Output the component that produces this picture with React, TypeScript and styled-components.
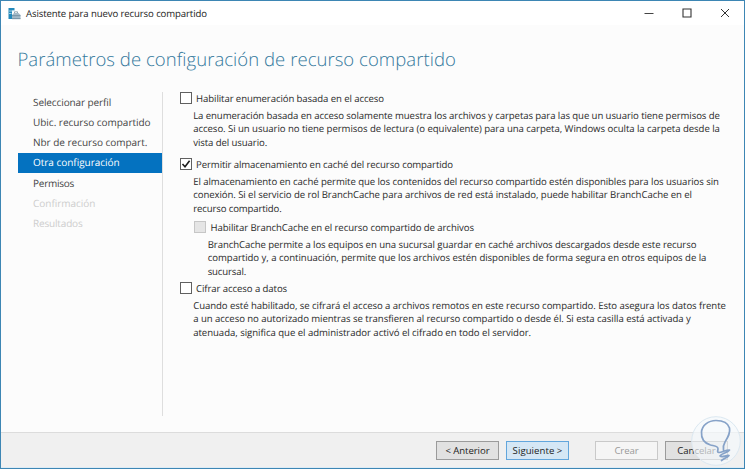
import React from 'react';
import styled, { createGlobalStyle, css } from 'styled-components';

const GlobalStyle = createGlobalStyle`
  * { box-sizing: border-box; }
  html, body { margin: 0; padding: 0; overflow: hidden; }
  body { font-family: 'Open Sans', 'Noto Sans', sans-serif; text-rendering: geometricPrecision; }
`;

const Window = styled.div`
  position: relative;
  display: flex;
  flex-direction: column;
  width: 745px;
  height: 469px;
  border: 1px solid #3d86b4;
  background: #fcfcfc;
  color: #2b2b2b;
  font-size: 9.6px;
`;

const TitleBar = styled.header`
  display: flex;
  align-items: center;
  height: 24px;
  padding: 0 14px 0 7px;
  background: #fff;
`;

const Title = styled.span`
  flex: 1;
  margin-left: 5px;
  letter-spacing: -0.11px;
  color: #222;
  white-space: nowrap;
`;

const WindowControls = styled.div`
  display: flex;
  gap: 28px;
`;

const Heading = styled.h1`
  height: 67px;
  margin: 0;
  padding: 21.5px 0 0 16.5px;
  font-size: 18.5px;
  font-weight: 300;
  line-height: 26px;
  letter-spacing: 0.05px;
  color: #34799c;
  white-space: nowrap;
`;

const Body = styled.main`
  display: flex;
  flex: 1;
  padding-left: 17px;
`;

const Steps = styled.nav`
  width: 144.5px;
  height: 324px;
  border-right: 1.5px solid #dedede;
`;

const Step = styled.div<{ $state?: 'active' | 'disabled'; $spacing?: string }>`
  display: flex;
  align-items: center;
  height: 20.2px;
  padding: 0 0 0.5px 15px;
  font-size: 10px;
  letter-spacing: ${(p) => p.$spacing ?? '-0.02px'};
  color: #444;
  white-space: nowrap;
  ${(p) => p.$state === 'active' && css`
    background: #0472c0;
    color: #fff;
  `}
  ${(p) => p.$state === 'disabled' && css`color: #cdcdcd;`}
`;

const Options = styled.section`
  display: flex;
  flex-direction: column;
  padding-left: 17px;
`;

const Option = styled.div<{ $nested?: boolean; $height: number }>`
  height: ${(p) => p.$height}px;
  margin-left: ${(p) => (p.$nested ? '14.5px' : 0)};
`;

const OptionLabel = styled.label<{ $spacing: number }>`
  display: flex;
  align-items: center;
  gap: 4.6px;
  height: 12px;
  letter-spacing: ${(p) => p.$spacing}px;
  white-space: nowrap;
`;

const CheckBox = styled.span<{ $disabled?: boolean }>`
  display: flex;
  width: 12px;
  height: 12px;
  border: 1px solid ${(p) => (p.$disabled ? '#c6c6c6' : '#606060')};
  background: ${(p) => (p.$disabled ? '#e5e5e5' : '#fff')};
`;

const Description = styled.div`
  padding: 5px 0 0 13.7px;
`;

const Line = styled.div<{ $spacing: number }>`
  height: 13.35px;
  line-height: 13.35px;
  letter-spacing: ${(p) => p.$spacing}px;
  white-space: nowrap;
`;

const Footer = styled.footer`
  display: flex;
  height: 36px;
  padding: 8px 16px 0 0;
  justify-content: flex-end;
  gap: 7px;
  border-top: 1px solid #dcdcdc;
  border-bottom: 1px solid #dcebf5;
  background: #f0f0f0;
`;

const Button = styled.button<{ $kind?: 'default' | 'disabled'; $spacing?: number }>`
  width: 63px;
  height: 19px;
  padding: 0 0 1px;
  border: 1px solid #9b9b9b;
  background: #e1e1e1;
  color: #222;
  font: 9.6px 'Open Sans', 'Noto Sans', sans-serif;
  letter-spacing: ${(p) => p.$spacing ?? -0.08}px;
  ${(p) => p.$kind === 'default' && css`
    margin-right: 19px;
    border-color: #62a6dc;
    background: #d5e7f5;
  `}
  ${(p) => p.$kind === 'disabled' && css`
    border-color: #c9c9c9;
    background: #f5f5f5;
    color: #999;
  `}
`;

const Watermark = styled.svg`
  position: absolute;
  right: 3px;
  bottom: 2px;
`;

type OptionData = {
  label: string;
  spacing: number;
  checked?: boolean;
  disabled?: boolean;
  nested?: boolean;
  height: number;
  lines: [string, number][];
};

const options: OptionData[] = [
  {
    label: 'Habilitar enumeración basada en el acceso', spacing: -0.093, height: 66,
    lines: [
      ['La enumeración basada en acceso solamente muestra los archivos y carpetas para las que un usuario tiene permisos de', -0.088],
      ['acceso. Si un usuario no tiene permisos de lectura (o equivalente) para una carpeta, Windows oculta la carpeta desde la', -0.056],
      ['vista del usuario.', -0.087],
    ],
  },
  {
    label: 'Permitir almacenamiento en caché del recurso compartido', spacing: -0.106, checked: true, height: 63,
    lines: [
      ['El almacenamiento en caché permite que los contenidos del recurso compartido estén disponibles para los usuarios sin', -0.073],
      ['conexión. Si el servicio de rol BranchCache para archivos de red está instalado, puede habilitar BranchCache en el', -0.076],
      ['recurso compartido.', -0.132],
    ],
  },
  {
    label: 'Habilitar BranchCache en el recurso compartido de archivos', spacing: -0.085, disabled: true, nested: true, height: 61,
    lines: [
      ['BranchCache permite a los equipos en una sucursal guardar en caché archivos descargados desde este recurso', -0.081],
      ['compartido y, a continuación, permite que los archivos estén disponibles de forma segura en otros equipos de la', -0.044],
      ['sucursal.', -0.15],
    ],
  },
  {
    label: 'Cifrar acceso a datos', spacing: -0.092, height: 60,
    lines: [
      ['Cuando esté habilitado, se cifrará el acceso a archivos remotos en este recurso compartido. Esto asegura los datos frente', -0.068],
      ['a un acceso no autorizado mientras se transfieren al recurso compartido o desde él. Si esta casilla está activada y', -0.061],
      ['atenuada, significa que el administrador activó el cifrado en todo el servidor.', -0.045],
    ],
  },
];

const ServerIcon = () => (
  <svg width="13" height="13" viewBox="0 0 13 13">
    <path d="M0.500 1h6v2.500H4V12H0.500z" fill="#2389bb" />
    <path d="M1 4h5M1 6.500h2.500" stroke="#d8edf6" strokeWidth=".7" />
    <path d="M6.500 6V4.800h3V6" fill="none" stroke="#78909e" strokeWidth=".8" />
    <path d="M4 8 6 6h4.500L12.500 8v4H4z" fill="#a3b9c7" />
    <path d="M4 8.700h8.500M4 11.700h8.500" stroke="#688799" strokeWidth=".8" />
  </svg>
);

const CheckMark = () => (
  <svg width="10" height="10" viewBox="0 0 10 10">
    <path d="M1.5 5 4 7.7 8.6 1.8" fill="none" stroke="#1c1c1c" strokeWidth="1.6" />
  </svg>
);

export default function App() {
  return (
    <>
      <GlobalStyle />
      <Window>
        <TitleBar>
          <ServerIcon />
          <Title>Asistente para nuevo recurso compartido</Title>
          <WindowControls>
            <svg width="10" height="10" viewBox="0 0 10 10"><path d="M.5 5.5h9" stroke="#444" /></svg>
            <svg width="10" height="10" viewBox="0 0 10 10"><path d="M1 1h8v8H1z" fill="none" stroke="#333" strokeWidth="1.1" /></svg>
            <svg width="10" height="10" viewBox="0 0 10 10"><path d="m1 1 8 8M9 1 1 9" stroke="#333" /></svg>
          </WindowControls>
        </TitleBar>
        <Heading>Parámetros de configuración de recurso compartido</Heading>
        <Body>
          <Steps>
            <Step $spacing="-0.1px">Seleccionar perfil</Step>
            <Step>Ubic. recurso compartido</Step>
            <Step>Nbr de recurso compart.</Step>
            <Step $state="active">Otra configuración</Step>
            <Step $spacing="-0.25px">Permisos</Step>
            <Step $state="disabled">Confirmación</Step>
            <Step $state="disabled" $spacing="-0.17px">Resultados</Step>
          </Steps>
          <Options>
            {options.map((o) => (
              <Option key={o.label} $nested={o.nested} $height={o.height}>
                <OptionLabel $spacing={o.spacing}>
                  <CheckBox $disabled={o.disabled}>{o.checked && <CheckMark />}</CheckBox>
                  {o.label}
                </OptionLabel>
                <Description>
                  {o.lines.map(([text, spacing]) => <Line key={text} $spacing={spacing}>{text}</Line>)}
                </Description>
              </Option>
            ))}
          </Options>
        </Body>
        <Footer>
          <Button>&lt; Anterior</Button>
          <Button $kind="default" $spacing={0.05}>Siguiente &gt;</Button>
          <Button $kind="disabled" disabled>Crear</Button>
          <Button>Cancelar</Button>
        </Footer>
        <Watermark width="50" height="50" viewBox="0 0 50 50">
          <circle cx="25" cy="25" r="24.3" fill="#f5f9fc" fillOpacity=".68" stroke="#dbe8f1" />
          <path d="M32.500 34c-.5-3 0-5.500 1.500-8C37 21 39.500 17 38.500 12 37 7 32 4.500 25 4.500 17 4.500 11 9.500 10.500 16c-.5 7 2.500 11 9 13 4 1 8 1 7.500 4-.3 2-1 3.500 1 3.500 3 0 6-2.500 10.500-2.500-2 3-8 3-9.500 6 2 2 6-1 9-.5-1.500 2-5 3-7.500 5" fill="none" stroke="#86a2c8" strokeWidth="1.700" strokeLinecap="round" strokeLinejoin="round" />
        </Watermark>
      </Window>
    </>
  );
}
